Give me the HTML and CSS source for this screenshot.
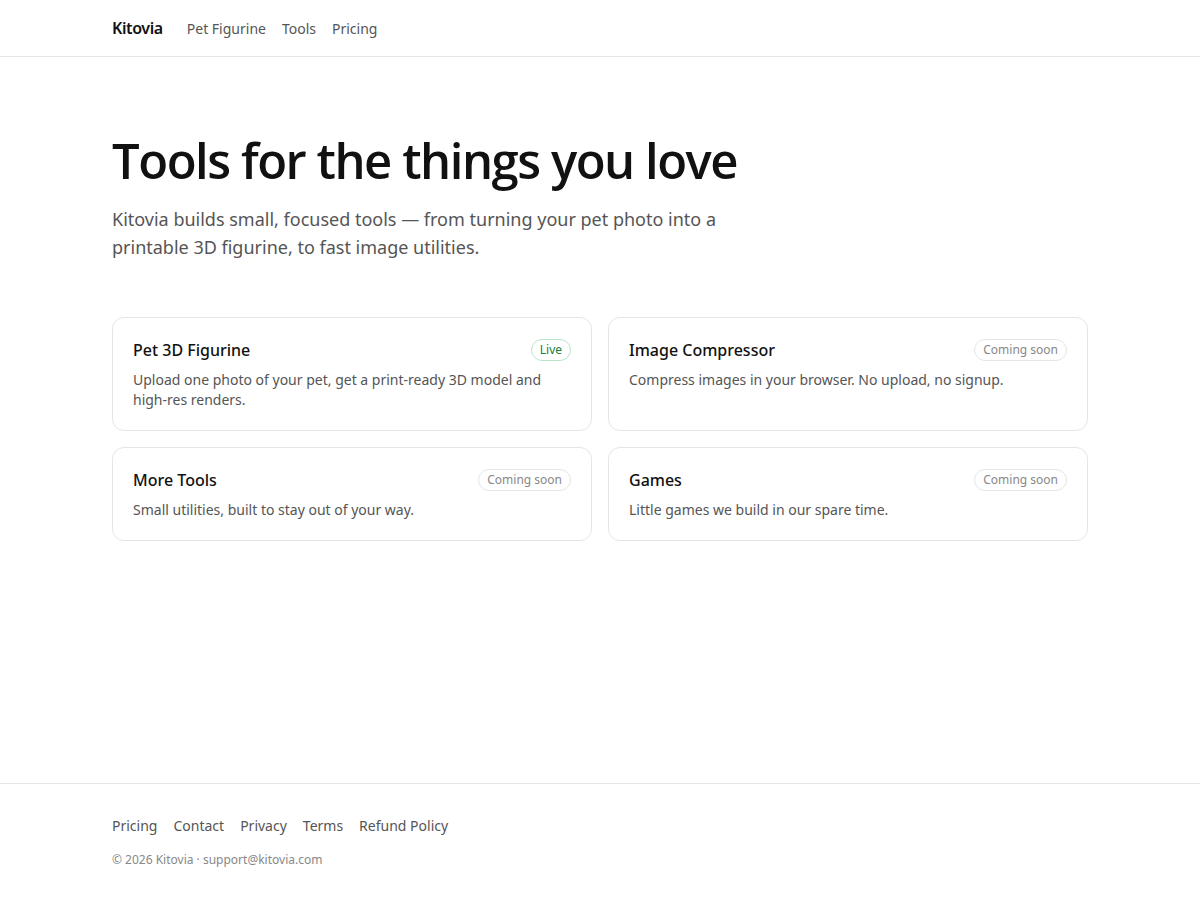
FILE: index.html
```html
<!DOCTYPE html>
<html lang="en">
<head>
<meta charset="utf-8">
<title>Kitovia</title>
<link rel="stylesheet" href="styles.css">
</head>
<body>
<div class="page">
  <header class="site-header">
    <div class="container header-inner">
      <a class="logo" href="#">Kitovia</a>
      <nav class="nav">
        <a href="#">Pet Figurine</a>
        <a href="#">Tools</a>
        <a href="#">Pricing</a>
      </nav>
    </div>
  </header>

  <main class="main">
    <div class="container">
      <section class="hero">
        <h1>Tools for the things you love</h1>
        <p class="lead">Kitovia builds small, focused tools — from turning your pet photo into a printable 3D figurine, to fast image utilities.</p>
      </section>

      <section class="grid">
        <div class="card">
          <div class="card-head">
            <h2>Pet 3D Figurine</h2>
            <span class="badge badge-live">Live</span>
          </div>
          <p>Upload one photo of your pet, get a print-ready 3D model and high-res renders.</p>
        </div>
        <div class="card">
          <div class="card-head">
            <h2>Image Compressor</h2>
            <span class="badge">Coming soon</span>
          </div>
          <p>Compress images in your browser. No upload, no signup.</p>
        </div>
        <div class="card">
          <div class="card-head">
            <h2>More Tools</h2>
            <span class="badge">Coming soon</span>
          </div>
          <p>Small utilities, built to stay out of your way.</p>
        </div>
        <div class="card">
          <div class="card-head">
            <h2>Games</h2>
            <span class="badge">Coming soon</span>
          </div>
          <p>Little games we build in our spare time.</p>
        </div>
      </section>
    </div>
  </main>

  <footer class="site-footer">
    <div class="container">
      <nav class="footer-nav">
        <a href="#">Pricing</a>
        <a href="#">Contact</a>
        <a href="#">Privacy</a>
        <a href="#">Terms</a>
        <a href="#">Refund Policy</a>
      </nav>
      <p class="copy">© 2026 Kitovia · support@kitovia.com</p>
    </div>
  </footer>
</div>
</body>
</html>
```

FILE: styles.css
```css
* { box-sizing: border-box; }
html, body { margin: 0; padding: 0; }
body {
  font-family: "Noto Sans", "Open Sans", "DejaVu Sans", sans-serif;
  color: #111;
  background: #fff;
}
a { text-decoration: none; color: inherit; }

.page {
  min-height: 100vh;
  display: flex;
  flex-direction: column;
}

.container {
  max-width: 1024px;
  margin: 0 auto;
  padding: 0 24px;
  width: 100%;
}

.site-header {
  border-bottom: 1px solid #e5e5e5;
}
.header-inner {
  height: 56px;
  display: flex;
  align-items: center;
  gap: 24px;
}
.logo {
  font-size: 16px;
  font-weight: 600;
  color: #111;
  letter-spacing: -0.025em;
}
.nav {
  display: flex;
  gap: 16px;
  font-size: 14px;
}
.nav a { color: #555; }

.main { flex: 1; }

.hero {
  padding-top: 75px;
}
.hero h1 {
  margin: 0;
  font-family: "Open Sans", "Noto Sans", sans-serif;
  font-size: 49px;
  line-height: 57px;
  font-weight: 600;
  letter-spacing: -0.03em;
  color: #111;
}
.lead {
  margin: 16px 0 0;
  max-width: 640px;
  font-size: 18px;
  line-height: 28px;
  color: #555;
}

.grid {
  margin-top: 56px;
  display: grid;
  grid-template-columns: 1fr 1fr;
  gap: 16px;
}
.card {
  border: 1px solid #e5e5e5;
  border-radius: 12px;
  padding: 20px;
}
.card-head {
  display: flex;
  align-items: center;
  justify-content: space-between;
  gap: 12px;
}
.card h2 {
  margin: 0;
  font-size: 16px;
  line-height: 24px;
  font-weight: 500;
  color: #111;
}
.card p {
  margin: 8px 0 0;
  font-size: 14px;
  line-height: 20px;
  color: #555;
}
.badge {
  font-size: 12px;
  line-height: 16px;
  padding: 2px 8px;
  border: 1px solid #e5e5e5;
  border-radius: 999px;
  color: #888;
  white-space: nowrap;
}
.badge-live {
  color: #15803d;
  border-color: #bbe5c8;
}

.site-footer {
  border-top: 1px solid #e5e5e5;
  padding: 32px 0 32px;
}
.footer-nav {
  display: flex;
  gap: 16px;
  font-size: 14px;
  line-height: 20px;
}
.footer-nav a { color: #555; }
.copy {
  margin: 16px 0 0;
  font-size: 12px;
  line-height: 16px;
  color: #888;
}
```
